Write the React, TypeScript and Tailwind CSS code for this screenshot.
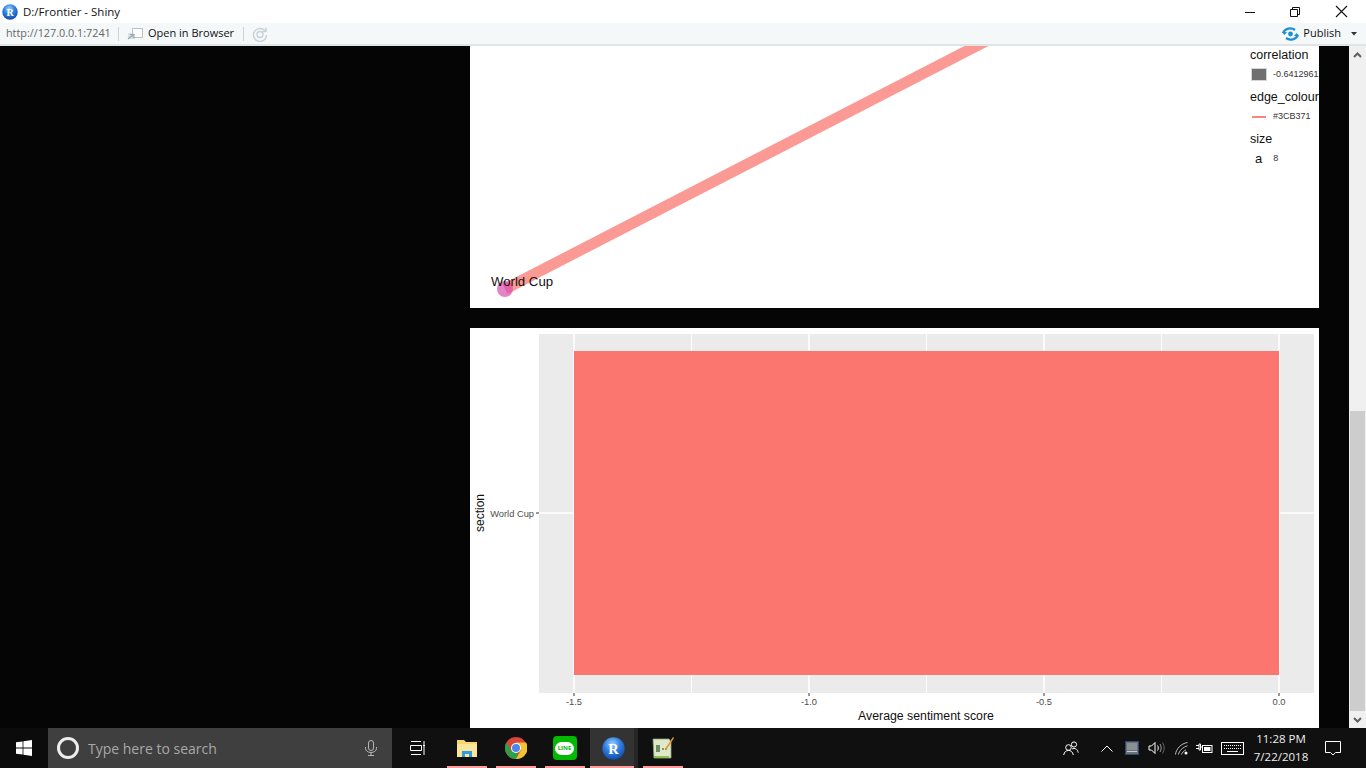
const uiFont = { fontFamily: '"Open Sans", "Noto Sans", sans-serif' };

function RLogo({ size = 16 }: { size?: number }) {
  return (
    <svg width={size} height={size} viewBox="0 0 32 32">
      <defs>
        <radialGradient id="rball" cx="0.45" cy="0.3" r="0.8">
          <stop offset="0" stopColor="#9fd0fb" />
          <stop offset="0.45" stopColor="#2f7fe0" />
          <stop offset="1" stopColor="#0b3d9c" />
        </radialGradient>
      </defs>
      <circle cx="16" cy="16" r="15.5" fill="url(#rball)" />
      <text x="16" y="23" textAnchor="middle" fontSize="20" fontWeight="700" fill="#fff" fontFamily="Liberation Serif, serif">R</text>
    </svg>
  );
}

function PublishIcon() {
  return (
    <svg width="17" height="14" viewBox="0 0 17 14" fill="none">
      <circle cx="8.5" cy="7" r="2.4" fill="#1c8fd6" />
      <path d="M1 6 C3 1.5 9 0 13 3 M16 8 C14 12.5 8 14 4 11" stroke="#1c8fd6" strokeWidth="2.2" />
      <path d="M0 5h5l-2.5 3zM17 9h-5l2.5-3z" fill="#1c8fd6" />
    </svg>
  );
}

function TitleBar() {
  return (
    <div className="h-[23px] shrink-0 bg-white flex items-center" style={uiFont}>
      <div className="ml-[2px] w-[21px]">
        <RLogo />
      </div>
      <span className="text-[11.5px] text-[#111]">D:/Frontier - Shiny</span>
      <div className="ml-auto flex items-center text-black">
        <svg width="12" height="12" viewBox="0 0 12 12" className="mr-[33px]"><path d="M1 6.5h10" stroke="#111" strokeWidth="1" /></svg>
        <svg width="12" height="12" viewBox="0 0 12 12" className="mr-[34px]" fill="none" stroke="#111"><path d="M1.5 3.5h7v7h-7zM3.5 3.5v-2h7v7h-2" /></svg>
        <svg width="13" height="13" viewBox="0 0 13 13" className="mr-[18px]"><path d="M1 1l11 11M12 1L1 12" stroke="#111" strokeWidth="1.1" /></svg>
      </div>
    </div>
  );
}

function ToolBar() {
  return (
    <div className="h-[23px] shrink-0 bg-[#f4f8f9] border-b-2 border-[#dfe4e6] flex items-center text-[11px]" style={uiFont}>
      <span className="ml-[6px] text-[#666] text-[10.8px] w-[112px]">http://127.0.0.1:7241</span>
      <div className="w-px h-[14px] bg-[#ccd2d4]" />
      <svg width="16" height="14" viewBox="0 0 16 14" className="ml-[8px]" fill="none">
        <rect x="5.5" y="1.5" width="10" height="9" fill="#fff" stroke="#b8c4cc" />
        <rect x="1" y="6" width="6" height="6" fill="#c9d6de" opacity="0.7" />
        <path d="M1 12l5-4M3 7.5h4v4" stroke="#9aa8b2" strokeWidth="1.2" />
      </svg>
      <span className="ml-[5px] text-[#111] w-[95px]">Open in Browser</span>
      <div className="w-px h-[14px] bg-[#ccd2d4]" />
      <svg width="16" height="16" viewBox="0 0 16 16" className="ml-[8px]" fill="none" stroke="#c8d2d8" strokeWidth="1.4">
        <path d="M13.5 5.5A6.5 6.5 0 1 0 14.5 9" />
        <path d="M10 5.5h4v-4" />
        <circle cx="8" cy="8.5" r="3" />
      </svg>
      <div className="ml-auto flex items-center">
        <PublishIcon />
        <span className="ml-[4px] text-[#111] text-[11px]">Publish</span>
        <svg width="6" height="4" viewBox="0 0 6 4" className="ml-[10px] mr-[9px]"><path d="M0 0h6L3 3.5z" fill="#333" /></svg>
      </div>
    </div>
  );
}

function NetworkPlot() {
  return (
    <div className="relative h-[262px] shrink-0 bg-white overflow-hidden" style={{ fontFamily: '"Liberation Sans", sans-serif' }}>
      <svg width="849" height="262" className="block">
        <line x1="35" y1="243" x2="520" y2="-7" stroke="#fb9a94" strokeWidth="11" />
        <circle cx="35" cy="243" r="8" fill="#d94fae" fillOpacity="0.7" />
        <text x="21" y="240" fontSize="13.2" fill="#111">World Cup</text>
      </svg>
      <div className="absolute left-[780px] top-0 w-[69px] text-[#111]">
        <div className="h-[19px] text-[12.5px] leading-[18px] whitespace-nowrap">correlation</div>
        <div className="h-[19px] flex items-center pl-[2px] whitespace-nowrap">
          <div className="w-[14px] h-[11px] bg-[#707070] outline outline-1 outline-[#d5d5d5]" />
          <span className="ml-[7px] text-[9px] text-[#333]">-0.6412961</span>
        </div>
        <div className="h-[23px] pt-[3px] text-[12.5px] leading-[20px] whitespace-nowrap">edge_colour</div>
        <div className="h-[19px] flex items-center pl-[2px] whitespace-nowrap">
          <div className="w-[14px] h-[2px] bg-[#f8867e]" />
          <span className="ml-[7px] text-[9px] text-[#333]">#3CB371</span>
        </div>
        <div className="h-[25px] pt-[3px] text-[12.5px] leading-[20px]">size</div>
        <div className="flex items-start pl-[5px]">
          <span className="text-[13px] leading-[15px]">a</span>
          <span className="ml-[11px] mt-[2px] text-[9px] leading-[10px] text-[#333]">8</span>
        </div>
      </div>
    </div>
  );
}

const majorX = [104, 339, 574, 809];
const minorX = [221.5, 456.5, 691.5];
const tickLabels = ['-1.5', '-1.0', '-0.5', '0.0'];

function SentimentPlot() {
  return (
    <div className="h-[400px] shrink-0 bg-white">
      <svg width="849" height="400" className="block" fontFamily="Liberation Sans, sans-serif">
        <rect x="69" y="6" width="775" height="359" fill="#ebebeb" />
        {minorX.map((x) => (
          <line key={x} x1={x} x2={x} y1="6" y2="365" stroke="#fff" strokeWidth="1" />
        ))}
        {majorX.map((x) => (
          <line key={x} x1={x} x2={x} y1="6" y2="365" stroke="#fff" strokeWidth="1.6" />
        ))}
        <line x1="69" x2="844" y1="185" y2="185" stroke="#fff" strokeWidth="1.6" />
        <rect x="104" y="23" width="705" height="324" fill="#fa766e" />
        <line x1="66" x2="69" y1="185" y2="185" stroke="#333" strokeWidth="1" />
        <text x="64" y="189" textAnchor="end" fontSize="9.3" fill="#4d4d4d">World Cup</text>
        {majorX.map((x, i) => (
          <g key={x}>
            <line x1={x} x2={x} y1="365" y2="368" stroke="#333" strokeWidth="1" />
            <text x={x} y="377" textAnchor="middle" fontSize="9.3" fill="#4d4d4d">{tickLabels[i]}</text>
          </g>
        ))}
        <text x="456" y="392" textAnchor="middle" fontSize="12.3" fill="#111">Average sentiment score</text>
        <text transform="translate(14 185) rotate(-90)" textAnchor="middle" fontSize="12" fill="#111">section</text>
      </svg>
    </div>
  );
}

function ScrollBar() {
  return (
    <div className="w-[17px] shrink-0 bg-[#f0f0f0] flex flex-col items-center">
      <div className="h-[17px] flex items-center justify-center">
        <svg width="9" height="6" viewBox="0 0 9 6"><path d="M1 5l3.5-3.5L8 5" fill="none" stroke="#606060" strokeWidth="2" /></svg>
      </div>
      <div className="flex-1" />
      <div className="w-[15px] h-[300px] bg-[#cdcdcd]" />
      <div className="h-[17px] flex items-center justify-center">
        <svg width="9" height="6" viewBox="0 0 9 6"><path d="M1 1l3.5 3.5L8 1" fill="none" stroke="#606060" strokeWidth="2" /></svg>
      </div>
    </div>
  );
}

function AppSlot({ children, active }: { children: React.ReactNode; active?: boolean }) {
  return (
    <div className="w-[49px] h-full flex justify-center shrink-0">
      <div className={active ? 'relative w-[44px] mr-[4px] pl-[3px] h-full flex items-center justify-center bg-[#333333]' : 'relative w-[40px] h-full flex items-center justify-center'}>
        {children}
        <div className="absolute left-0 right-0 bottom-0 h-[2px] bg-[#ff9c9c]" />
        {active && <div className="absolute left-full top-0 bottom-0 w-[4px] bg-[#262626]" />}
      </div>
    </div>
  );
}

function Taskbar() {
  return (
    <div className="h-[40px] shrink-0 bg-[#101010] flex items-center" style={uiFont}>
      <div className="w-[48px] h-full bg-[#0b0b0b] flex items-center justify-center">
        <svg width="16" height="16" viewBox="0 0 16 16" fill="#fff">
          <path d="M0 2.3l6.6-.9v6.2H0zM7.4 1.3L16 0v7.6H7.4zM0 8.4h6.6v6.2L0 13.7zM7.4 8.4H16V16l-8.6-1.2z" />
        </svg>
      </div>
      <div className="w-[344px] h-full bg-[#3f3f3f] flex items-center">
        <div className="ml-[9px] w-[22px] h-[22px] rounded-full border-[3px] border-[#eeeeee]" />
        <span className="ml-[9px] mt-[1px] text-[14px] text-[#a8a8a8]">Type here to search</span>
        <svg width="12" height="16" viewBox="0 0 12 16" fill="none" stroke="#b5b5b5" className="ml-auto mr-[15px]">
          <rect x="3.5" y="0.5" width="5" height="10" rx="2.5" />
          <path d="M0.5 7v1.5a5.5 4 0 0 0 11 0V7M6 12.5v3M3 15.5h6" />
        </svg>
      </div>
      <div className="w-[50px] h-full flex items-center justify-center">
        <svg width="16" height="16" viewBox="0 0 16 16" fill="none" stroke="#fff">
          <path d="M2 1.5h10M1.5 5.5h11v5h-11zM2 14.5h10M15 1v3M15 7v8" />
          <rect x="14" y="4.5" width="2" height="2" fill="#fff" stroke="none" />
        </svg>
      </div>
      <AppSlot>
        <svg width="22" height="20" viewBox="0 0 22 20">
          <path d="M1 2h7l2 2h11v15H1z" fill="#f6d56f" />
          <path d="M1 6h20v13H1z" fill="#fbe59a" />
          <path d="M6 19v-6h10v6h-3v-3H9v3z" fill="#2f9be0" />
        </svg>
      </AppSlot>
      <AppSlot>
        <svg width="22" height="22" viewBox="0 0 22 22">
          <circle cx="11" cy="11" r="11" fill="#d9463a" />
          <path d="M11 11L1.4 16.5A11 11 0 0 0 11 22c1 0 2-.1 2.6-.3z" fill="#2f9e48" />
          <path d="M11 5.5H21A11 11 0 0 1 11 22l5-9z" fill="#f2c230" />
          <path d="M1.4 5.5L6 13l-4.6 3.5A11 11 0 0 1 1.4 5.5z" fill="#2f9e48" />
          <circle cx="11" cy="11" r="5" fill="#fff" />
          <circle cx="11" cy="11" r="4" fill="#4b88ea" />
        </svg>
      </AppSlot>
      <AppSlot>
        <div className="w-[24px] h-[24px] rounded-[4px] bg-[#00b900] flex items-center justify-center">
          <div className="w-[19px] h-[13px] rounded-full bg-white flex items-center justify-center text-[6px] font-bold text-[#00b900] leading-none">LINE</div>
        </div>
      </AppSlot>
      <AppSlot active>
        <RLogo size={23} />
      </AppSlot>
      <AppSlot>
        <svg width="24" height="24" viewBox="0 0 24 24">
          <path d="M2 3h16l2 3v16H3z" fill="#dfe9c9" stroke="#8ea27a" strokeWidth="0.8" />
          <path d="M6 9v7M8 9v7M11 13h2M14 13h2" stroke="#1f4d1f" strokeWidth="1.2" />
          <path d="M3 20h15v2H3z" fill="#8cc152" />
          <path d="M22 1l1 1-7 11-2 1 .5-2z" fill="#e8962e" />
        </svg>
      </AppSlot>
      <div className="ml-auto h-full flex items-center text-white">
        <svg width="16" height="15" viewBox="0 0 16 15" fill="none" stroke="#fff" className="mr-[22px]">
          <circle cx="5.5" cy="6.5" r="2.8" />
          <path d="M0.7 14c.5-3 2.5-4.6 4.8-4.6S9.8 11 10.3 14" />
          <circle cx="11" cy="3.5" r="2.6" />
          <path d="M9 8c1-.6 3-.8 4.5.3.8.6 1.5 2 1.7 3.4" />
        </svg>
        <svg width="12" height="7" viewBox="0 0 12 7" className="mr-[12px]"><path d="M0.5 6.5L6 1l5.5 5.5" fill="none" stroke="#fff" /></svg>
        <svg width="14" height="14" viewBox="0 0 14 14" className="mr-[9px]">
          <rect x="0.5" y="0.5" width="13" height="13" fill="#6d7278" stroke="#2c4a6e" />
          <rect x="2" y="2" width="10" height="7" fill="#8b9096" />
          <path d="M2 10.5h10" stroke="#c6c9cc" />
        </svg>
        <svg width="17" height="14" viewBox="0 0 17 14" fill="none" stroke="#fff" className="mr-[10px]">
          <path d="M1 5h2.5L7 1.5v11L3.5 9H1z" />
          <path d="M9.5 4.5c1 1.5 1 3.5 0 5" />
          <path d="M12 3c1.6 2.5 1.6 5.5 0 8" stroke="#999" />
          <path d="M14.5 1.5c2.2 3.4 2.2 7.6 0 11" stroke="#666" />
        </svg>
        <svg width="13" height="13" viewBox="0 0 13 13" fill="none" stroke="#bdbdbd" className="mr-[8px]">
          <path d="M0.5 12.5C1 7 6 1.5 12.5 0.5" />
          <path d="M3.5 12.5C4 9 8 5 12.5 3.8" />
          <path d="M6.5 12.5C7 11 9 8.5 11 7.8" />
          <circle cx="11" cy="11" r="1.5" fill="#fff" stroke="none" />
        </svg>
        <svg width="17" height="11" viewBox="0 0 17 11" className="mr-[8px]" fill="none" stroke="#fff">
          <path d="M0 2.5h3M0 5.5h3M3 1h1.5v6H3zM4.5 4h2v6" />
          <rect x="6.5" y="2.5" width="9.5" height="7" />
          <rect x="8" y="4" width="6.5" height="4" fill="#fff" stroke="none" />
        </svg>
        <svg width="23" height="13" viewBox="0 0 23 13" fill="none" stroke="#fff" className="mr-[13px]">
          <rect x="0.5" y="0.5" width="22" height="12" />
          <path d="M3 3.5h17M3 6.5h17" strokeDasharray="1 1" />
          <path d="M6 9.5h11" />
        </svg>
        <div className="w-[48px] flex flex-col items-center text-[11.5px] leading-[18px] text-[#eee] whitespace-nowrap">
          <span>11:28 PM</span>
          <span>7/22/2018</span>
        </div>
        <svg width="16" height="15" viewBox="0 0 16 15" fill="none" stroke="#fff" className="ml-[20px] mr-[25px]">
          <path d="M0.5 0.5h15v11h-5L8 14l-2.5-2.5h-5z" />
        </svg>
      </div>
    </div>
  );
}

export default function App() {
  return (
    <div className="w-[1366px] h-[768px] flex flex-col overflow-hidden bg-[#050505]">
      <TitleBar />
      <ToolBar />
      <div className="flex-1 min-h-0 flex bg-[#050505]">
        <div className="w-[470px] shrink-0" />
        <div className="w-[849px] shrink-0 flex flex-col gap-[20px]">
          <NetworkPlot />
          <SentimentPlot />
        </div>
        <div className="flex-1" />
        <ScrollBar />
      </div>
      <Taskbar />
    </div>
  );
}
